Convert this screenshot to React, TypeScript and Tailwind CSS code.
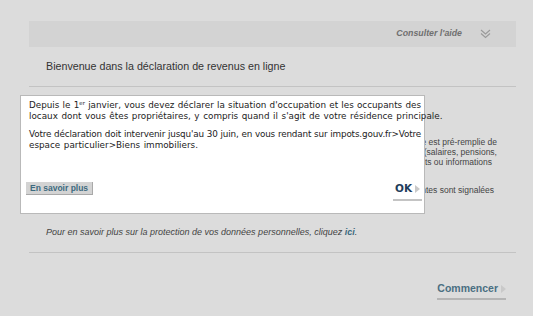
import React from "react"

function DoubleChevron() {
    return (
        <svg width="11" height="10" viewBox="0 0 11 10" fill="none" stroke="#9a9a9a" strokeWidth="1.1">
            <path d="M1 1 L5.5 5 L10 1" />
            <path d="M1 4.5 L5.5 8.5 L10 4.5" />
        </svg>
    )
}

function Arrow() {
    return <span className="inline-block w-0 h-0 border-y-[4px] border-y-transparent border-l-[5px] border-l-[#c9c9c9] ml-[3px]"></span>
}

export default function App() {
    return (
        <div className="w-[533px] h-[316px] bg-[#dcdcdc] relative overflow-hidden font-['Liberation_Sans',Arial,sans-serif]">
            <div className="pl-[29px] pr-[17px] pt-[21px]">
                {/* Aide */}
                <div className="h-[26px] bg-[#d3d3d3] flex items-center justify-end pr-[25px] gap-[18px]">
                    <span className="text-[8.8px] font-bold italic text-[#707070]">Consulter l'aide</span>
                    <DoubleChevron />
                </div>

                <div className="h-[40px] pl-[17px] flex items-center border-b border-[#c3c3c3]">
                    <span className="text-[10.7px] text-[#333]">Bienvenue dans la déclaration de revenus en ligne</span>
                </div>

                {/* Contenu derrière la fenêtre */}
                <div className="h-[166px] border-b border-[#c3c3c3] pl-[17px] pr-[19px] text-[8.5px] text-[#444] leading-[10px]">
                    <div className="h-[50px]"></div>
                    <div className="text-right whitespace-nowrap overflow-hidden">Pour vous simplifier la tâche, votre déclaration en ligne est pré-remplie de</div>
                    <div className="text-right whitespace-nowrap overflow-hidden">certains revenus connus de l'administration, (salaires, pensions,</div>
                    <div className="text-right whitespace-nowrap overflow-hidden pr-[5px]">indemnités...). Vérifiez bien ces montants ou informations</div>
                    <div className="h-[18px]"></div>
                    <div className="text-right whitespace-nowrap overflow-hidden pr-[3px]">Les rubriques importantes sont signalées</div>
                    <div className="h-[32px]"></div>
                    <div className="italic text-[9px] text-[#444]">
                        Pour en savoir plus sur la protection de vos données personnelles, cliquez <span className="font-bold text-[#3d6a80]">ici</span>.
                    </div>
                </div>

                <div className="flex justify-end pr-[10px] pt-[28px]">
                    <div className="flex flex-col items-start">
                        <div className="flex items-center text-[10.5px] font-bold text-[#4a6f82]">
                            Commencer
                            <Arrow />
                        </div>
                        <div className="w-full h-[2px] bg-[#b5b5b5] mt-[1px]"></div>
                    </div>
                </div>
            </div>

            {/* Fenêtre d'information */}
            <div className="absolute left-[20px] top-[95px] w-[405px] h-[119px] bg-white border border-[#b9b9b9] flex flex-col">
                <div className="pl-[8px] pr-[3px] pt-[4px] text-[8.8px] leading-[11px] text-[#222] font-['DejaVu_Sans',Verdana,sans-serif]">
                    <div className="[text-align-last:justify]">
                        Depuis le 1<sup className="text-[5.5px]">er</sup> janvier, vous devez déclarer la situation d'occupation et les occupants des
                    </div>
                    <div className="whitespace-nowrap [word-spacing:0.8px]">
                        locaux dont vous êtes propriétaires, y compris quand il s'agit de votre résidence principale.
                    </div>
                    <div className="[text-align-last:justify] tracking-[-0.15px] mt-[7px]">
                        Votre déclaration doit intervenir jusqu'au 30 juin, en vous rendant sur impots.gouv.fr&gt;Votre
                    </div>
                    <div className="whitespace-nowrap [word-spacing:0.8px]">
                        espace particulier&gt;Biens immobiliers.
                    </div>
                </div>
                <div className="mt-auto flex items-end justify-between pl-[5px] pr-[2px] pb-[12px]">
                    <button className="h-[13px] px-[4px] bg-[#d3d3d3] border-r border-b border-[#a9a9a9] text-[8.5px] font-bold text-[#3d6a80] leading-none mb-[6px]">
                        En savoir plus
                    </button>
                    <div className="flex flex-col items-center w-[29px]">
                        <div className="flex items-center text-[10.5px] font-bold text-[#1f3d5c] font-['DejaVu_Sans',Verdana,sans-serif]">
                            OK
                            <Arrow />
                        </div>
                        <div className="w-full h-[2px] bg-[#c4c4c4] mt-[2px]"></div>
                    </div>
                </div>
            </div>
        </div>
    )
}
